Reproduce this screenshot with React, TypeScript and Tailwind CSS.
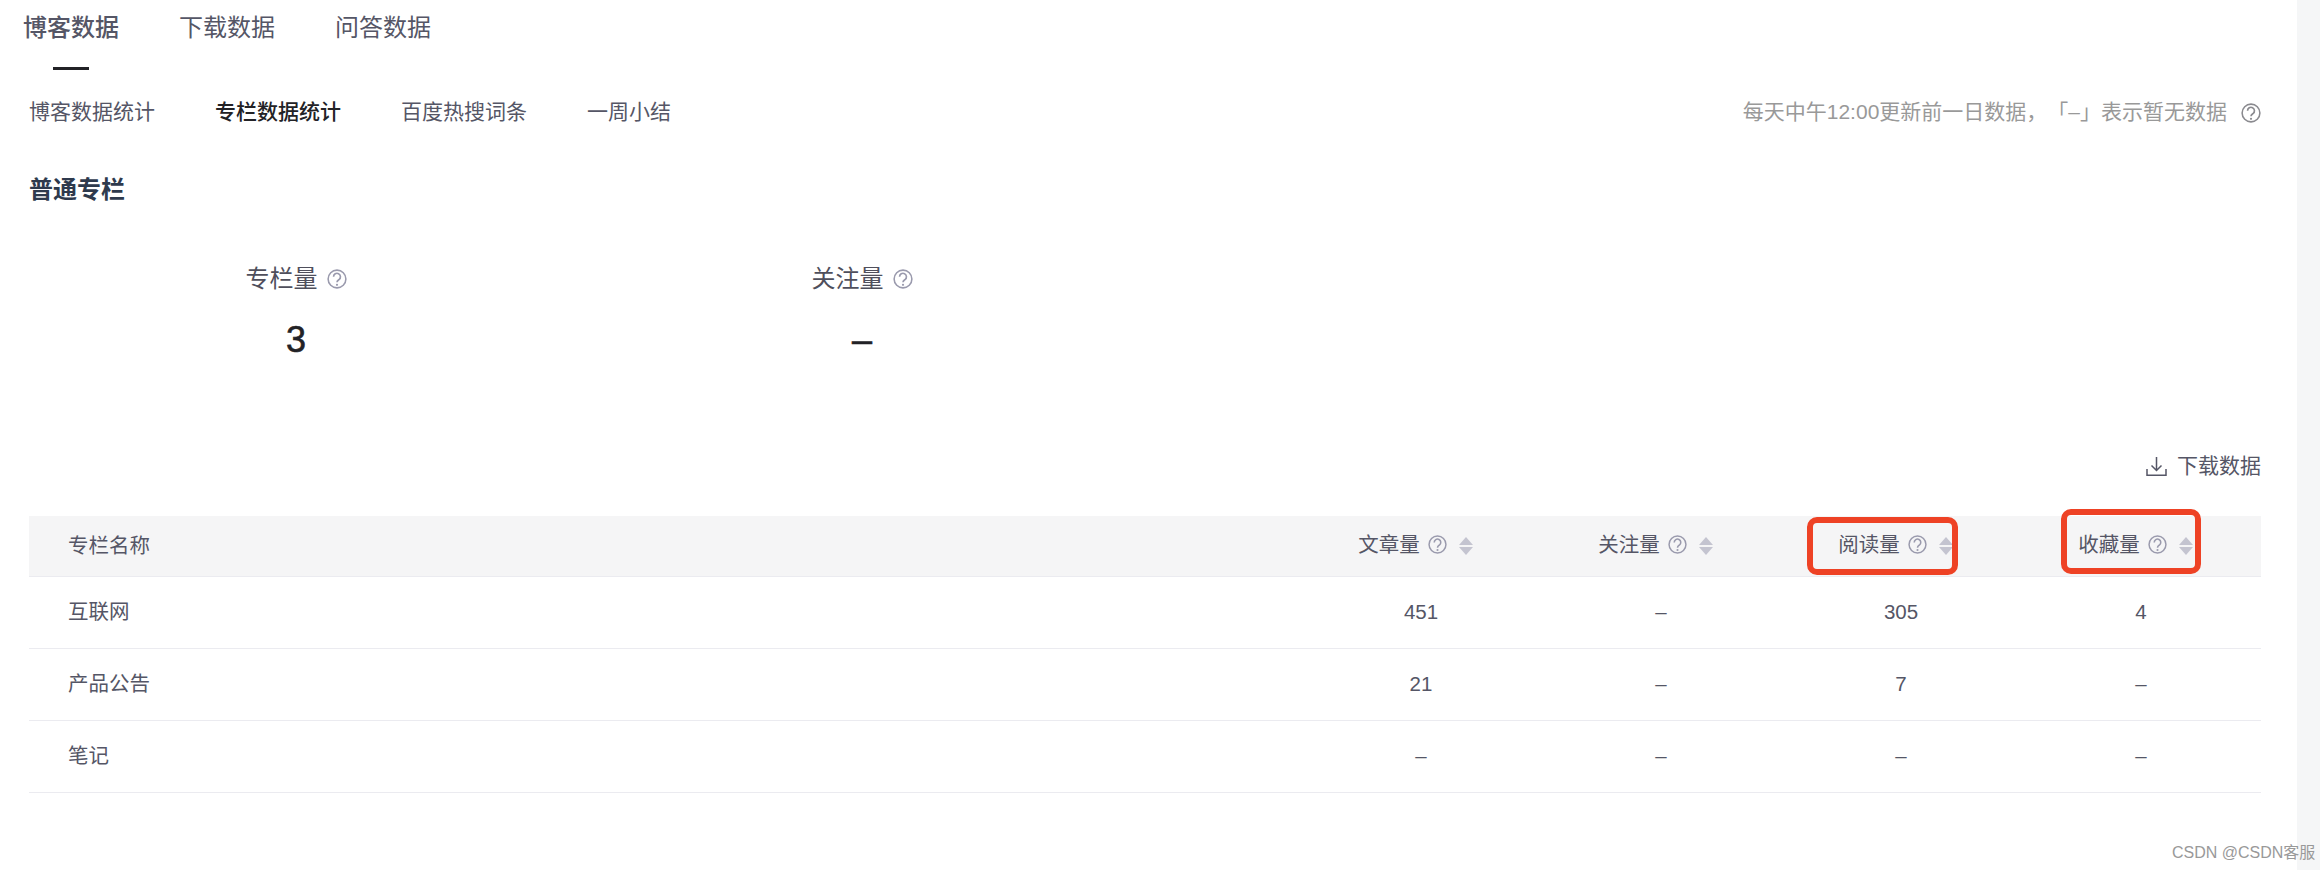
import React from 'react';

const baseFont = "font-['Liberation_Sans','Noto_Sans_CJK_SC',sans-serif]";

const HelpIcon = ({ size = 19, className = 'text-[#9a9aad]' }: { size?: number; className?: string }) => (
  <svg width={size} height={size} viewBox="0 0 18 18" fill="none" stroke="currentColor" className={`shrink-0 ${className}`}>
    <circle cx="9" cy="9" r="8" strokeWidth="1.4" />
    <path d="M5.9 7a3.1 3.1 0 1 1 4.9 2.5c-1.1.8-1.8 1.2-1.8 2.5" strokeWidth="1.5" />
    <circle cx="9" cy="14.2" r="1" fill="currentColor" stroke="none" />
  </svg>
);

const SortIcon = () => (
  <svg width="14" height="18" viewBox="0 0 14 18" className="shrink-0 text-[#c4c4d0]" fill="currentColor">
    <path d="M7 0l7 8H0z" />
    <path d="M0 10h14l-7 8z" />
  </svg>
);

const DownloadIcon = () => (
  <svg width="21" height="21" viewBox="0 0 21 21" fill="none" stroke="#555666" strokeWidth="1.5" className="shrink-0">
    <path d="M10.5 1v13M5.5 9.5l5 5 5-5" />
    <path d="M1 13v6.2h19V13" />
  </svg>
);

const columns = [
  { label: '文章量' },
  { label: '关注量' },
  {
    label: '阅读量',
    box: 'absolute left-[26px] top-[1px] w-[151px] h-[58px] border-[6px] border-[#ee4225] rounded-[10px]',
  },
  {
    label: '收藏量',
    box: 'absolute left-[40px] top-[-7px] w-[140px] h-[65px] border-[6px] border-[#ee4225] rounded-[10px]',
  },
];

const rows = [
  { name: '互联网', values: ['451', '–', '305', '4'] },
  { name: '产品公告', values: ['21', '–', '7', '–'] },
  { name: '笔记', values: ['–', '–', '–', '–'] },
];

const subTabs = ['博客数据统计', '专栏数据统计', '百度热搜词条', '一周小结'];

const Stat = ({ label, value }: { label: string; value: string }) => (
  <div className="w-[566px] flex flex-col items-center">
    <div className="h-[32px] flex items-center gap-[9px] text-[24px] text-[#4f4f5c]">
      <span>{label}</span>
      <HelpIcon size={20} />
    </div>
    <div className="mt-[25px] h-[40px] flex items-center text-[36px] text-[#222226] leading-none [-webkit-text-stroke:0.6px_#222226]">
      {value}
    </div>
  </div>
);

export default function App() {
  return (
    <div className={`flex h-[870px] w-full overflow-hidden bg-[#f5f6f7] relative ${baseFont}`}>
      <div className="w-[2297px] shrink-0 bg-white pl-[29px] pr-[36px]">
        <div className="-ml-[6px] flex h-[54px] items-center gap-[60px] pt-[2px] text-[24px] text-[#555666]">
          <span className="font-medium">博客数据</span>
          <span>下载数据</span>
          <span>问答数据</span>
        </div>
        <div className="mt-[13px] ml-[24px] h-[3px] w-[36px] bg-[#222226]" />

        <div className="mt-[21px] flex h-[40px] items-center justify-between pt-[1px]">
          <div className="flex gap-[60px] text-[21px] text-[#555666]">
            {subTabs.map((tab, i) => (
              <span key={tab} className={i === 1 ? 'font-medium text-[#222226]' : ''}>
                {tab}
              </span>
            ))}
          </div>
          <div className="flex items-center gap-[14px] text-[21px] text-[#999999] [text-spacing-trim:space-all]">
            <span>每天中午12:00更新前一日数据，「–」表示暂无数据</span>
            <HelpIcon size={20} className="text-[#8a8a8f] mt-[3px]" />
          </div>
        </div>

        <div className="mt-[43px] h-[32px] flex items-center text-[24px] font-bold text-[#2e3a4d]">普通专栏</div>

        <div className="mt-[57px] -ml-[16px] flex">
          <Stat label="专栏量" value="3" />
          <Stat label="关注量" value="–" />
        </div>

        <div className="mt-[91px] flex h-[30px] items-center justify-end gap-[10px] text-[21px] text-[#555666]">
          <DownloadIcon />
          <span>下载数据</span>
        </div>

        <div className="mt-[35px] text-[20.5px] text-[#555666]">
          <div className="grid h-[61px] grid-cols-[1fr_240px_240px_240px_240px] items-center border-b border-[#ebebf0] bg-[#f5f5f6]">
            <div className="pl-[39px]">专栏名称</div>
            {columns.map((col) => (
              <div key={col.label} className="relative flex h-full items-center justify-center pr-[11px]">
                <span className="-mt-[1px]">{col.label}</span>
                <span className="ml-[8px] flex -mt-[3px]">
                  <HelpIcon size={19} />
                </span>
                <span className="ml-[12px] flex">
                  <SortIcon />
                </span>
                {col.box && <div className={col.box} />}
              </div>
            ))}
          </div>
          {rows.map((row) => (
            <div
              key={row.name}
              className="grid h-[72px] grid-cols-[1fr_240px_240px_240px_240px] items-center border-b border-[#ebebf0]"
            >
              <div className="pl-[39px]">{row.name}</div>
              {row.values.map((v, i) => (
                <div key={i} className="text-center">
                  {v}
                </div>
              ))}
            </div>
          ))}
        </div>
      </div>
      <div className="flex-1" />
      <div className="absolute left-[2172px] top-[843px] text-[16px] leading-[20px] whitespace-nowrap text-[#999999]">
        CSDN @CSDN客服
      </div>
    </div>
  );
}
